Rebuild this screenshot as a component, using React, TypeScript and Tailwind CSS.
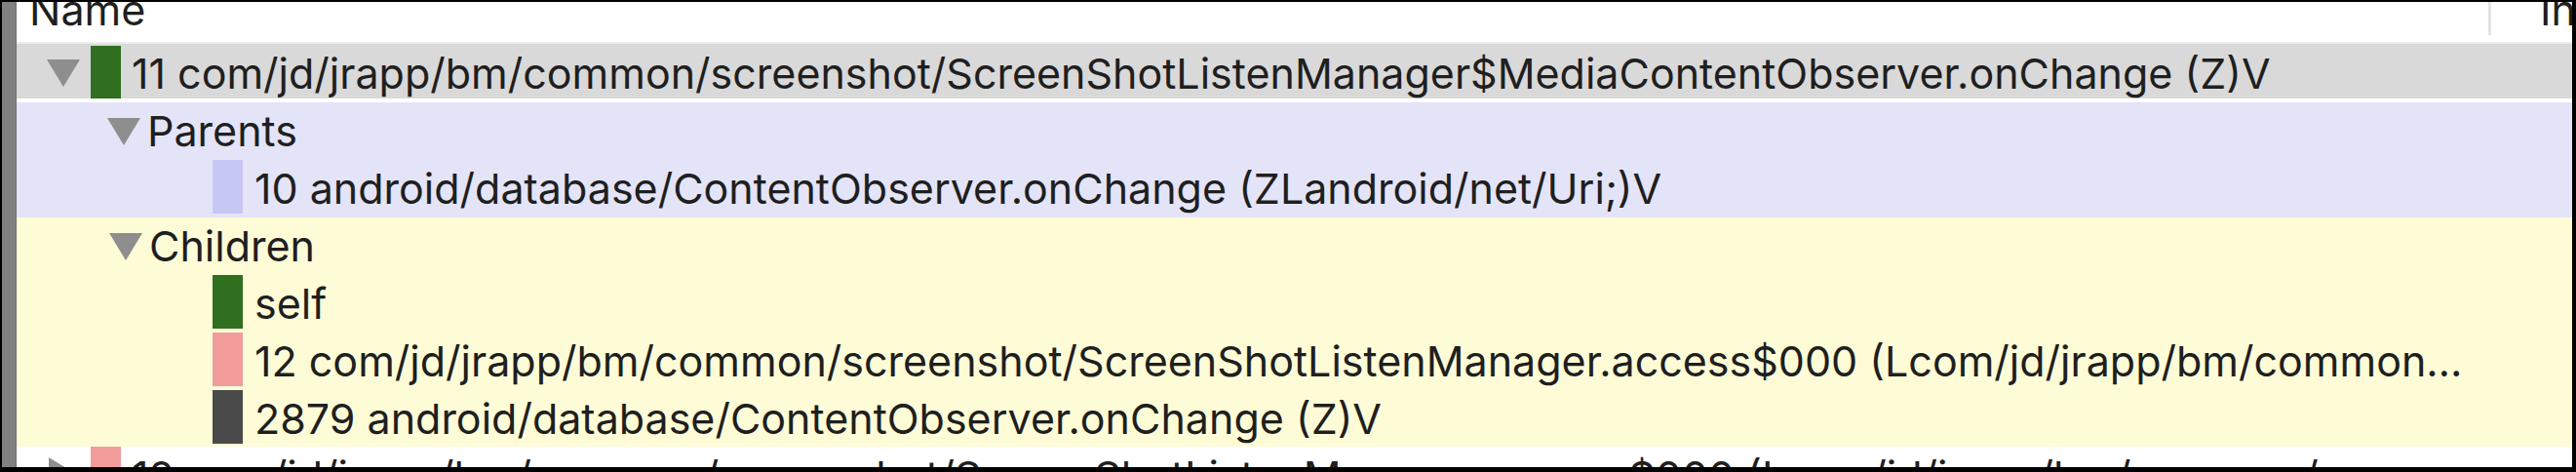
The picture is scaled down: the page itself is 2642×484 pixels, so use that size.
import React from "react";

const FONT = { fontFamily: "Inter, 'Noto Sans', sans-serif" };

function Down() {
  return (
    <svg width="34" height="28" viewBox="0 0 34 28" className="shrink-0">
      <polygon points="0,0 34,0 17,28" fill="#8e8e8e" />
    </svg>
  );
}

function Right() {
  return (
    <svg width="28" height="34" viewBox="0 0 28 34" className="shrink-0 self-start mt-[7px]">
      <polygon points="0,0 28,17 0,34" fill="#8e8e8e" />
    </svg>
  );
}

function Box({ color }: { color: string }) {
  return <div className={`w-[31px] h-[55px] shrink-0 self-start ${color}`} />;
}

export default function App() {
  return (
    <div
      className="w-[2642px] h-[484px] bg-black pt-[2px] pl-[2px] pr-[4px] pb-[5px] flex overflow-hidden"
      style={FONT}
    >
      <div className="w-[14px] bg-[#808080] shrink-0" />
      <div className="w-[1px] bg-[#6f6f6f] shrink-0" />
      <div className="flex-1 flex flex-col bg-white overflow-hidden text-[43px] leading-none text-[#1f1f1f] whitespace-nowrap">
        {/* header */}
        <div className="h-[43px] shrink-0 flex overflow-hidden border-b-[2px] border-[#ececec]">
          <div className="w-[2535px] shrink-0 pl-[13px] -mt-[13px]">Name</div>
          <div className="w-[3px] h-[34px] bg-[#e3e3e3] shrink-0" />
          <div className="pl-[50px] -mt-[13px]">In</div>
        </div>

        {/* main row */}
        <div className="h-[56px] shrink-0 bg-[#d9d9d9] flex items-center pl-[31px] pt-[4px]">
          <Down />
          <div className="ml-[11px] w-[31px] h-[54px] bg-[#2f6f1f] shrink-0 self-end" />
          <span className="ml-[11px]">
            11 com/jd/jrapp/bm/common/screenshot/ScreenShotListenManager$MediaContentObserver.onChange (Z)V
          </span>
        </div>
        <div className="h-[4px] shrink-0 bg-white" />

        {/* parents */}
        <div className="shrink-0 bg-[#e4e4f8] flex flex-col">
          <div className="h-[59px] flex items-center pl-[93px]">
            <Down />
            <span className="ml-[7px]">Parents</span>
          </div>
          <div className="h-[59px] flex items-center pl-[201px]">
            <Box color="bg-[#c7c7f4]" />
            <span className="ml-[12px]">10 android/database/ContentObserver.onChange (ZLandroid/net/Uri;)V</span>
          </div>
        </div>

        {/* children */}
        <div className="shrink-0 bg-[#fefcd7] flex flex-col">
          <div className="h-[59px] flex items-center pl-[95px]">
            <Down />
            <span className="ml-[7px]">Children</span>
          </div>
          <div className="h-[59px] flex items-center pl-[201px]">
            <Box color="bg-[#2f6f1f]" />
            <span className="ml-[12px]">self</span>
          </div>
          <div className="h-[59px] flex items-center pl-[201px]">
            <Box color="bg-[#f19b9b]" />
            <span className="ml-[12px]">
              12 com/jd/jrapp/bm/common/screenshot/ScreenShotListenManager.access$000 (Lcom/jd/jrapp/bm/common…
            </span>
          </div>
          <div className="h-[58px] flex items-center pl-[201px]">
            <Box color="bg-[#4a4a4a]" />
            <span className="ml-[12px]">2879 android/database/ContentObserver.onChange (Z)V</span>
          </div>
        </div>

        {/* next row (partially visible) */}
        <div className="h-[56px] shrink-0 bg-white flex items-center pl-[33px] pt-[4px]">
          <Right />
          <div className="ml-[15px] w-[31px] h-[54px] bg-[#f19b9b] shrink-0 self-start -mt-[4px]" />
          <span className="ml-[11px] w-[2405px] shrink-0 overflow-hidden text-ellipsis">
            12 com/jd/jrapp/bm/common/screenshot/ScreenShotListenManager.access$000 (Lcom/jd/jrapp/bm/common/screenshot/ScreenShotListenManager;)Landroid/content/Context;
          </span>
        </div>
      </div>
    </div>
  );
}
